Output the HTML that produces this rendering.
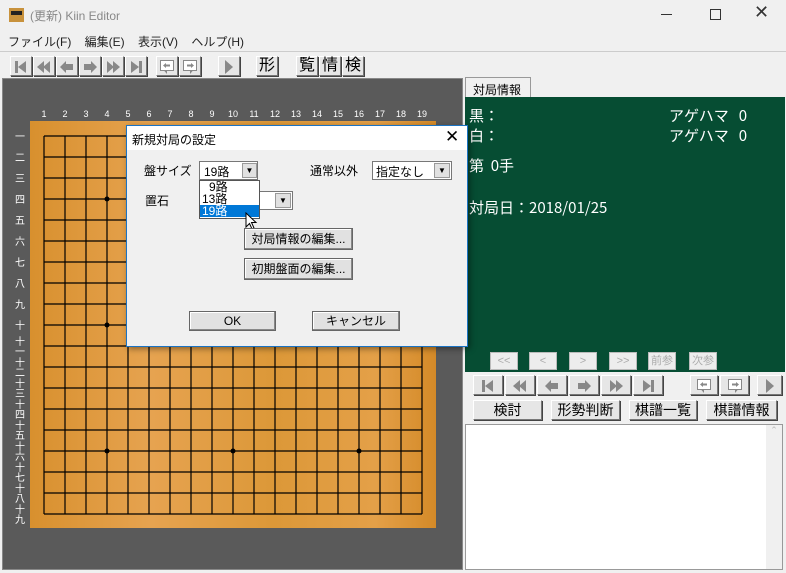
<!DOCTYPE html>
<html><head><meta charset="utf-8"><style>
*{margin:0;padding:0;box-sizing:border-box}
body{width:786px;height:573px;overflow:hidden;background:#f0f0f0;font-family:"Liberation Sans","Noto Sans CJK JP",sans-serif;position:relative;font-size:12px;color:#000}
.a{position:absolute}
.btn{position:absolute;background:#e6e6e6;border:1px solid;border-color:#fff #777 #777 #fff;box-shadow:1px 1px 0 #444;text-align:center;font-size:14px;line-height:18px}
.tb{height:20px;width:22px;color:#999;font-size:12px;line-height:18px}
.tb svg{margin-top:2px}
.k{color:#000;font-size:16px}
.nb{position:absolute;top:352px;height:18px;width:28px;background:#ededed;border:1px solid #bbb;color:#aaa;font-size:11px;line-height:16px;text-align:center}
.dlgbtn{position:absolute;background:#e1e1e1;border:1px solid #666;box-shadow:inset -1px -1px 0 #888,inset 1px 1px 0 #fff;font-size:12px;text-align:center}
.w{color:#fff;font-size:15px;font-family:"Noto Sans CJK JP",sans-serif}
</style></head><body>
<svg width="0" height="0" style="position:absolute"><defs>
<g id="first" fill="#888"><rect x="2" y="2" width="3" height="12"/><path d="M13 2L5 8L13 14Z"/></g>
<g id="ff" fill="#888"><path d="M8 2L1 8L8 14ZM14 2L7 8L14 14Z"/></g>
<g id="lt" fill="#888"><path d="M1 8L7 2V5H14V11H7V14Z"/></g>
<g id="rt" fill="#888"><path d="M15 8L9 2V5H2V11H9V14Z"/></g>
<g id="nf" fill="#888"><path d="M8 2L15 8L8 14ZM2 2L9 8L2 14Z"/></g>
<g id="last" fill="#888"><rect x="11" y="2" width="3" height="12"/><path d="M3 2L11 8L3 14Z"/></g>
<g id="bl"><rect x="1.5" y="1.5" width="13" height="10" fill="#fff" stroke="#888"/><path d="M5 11.5L8 15L8 11.5Z" fill="#888"/><path d="M4 6.5L7 4V5.5H11V7.5H7V9Z" fill="#888"/></g>
<g id="br"><rect x="1.5" y="1.5" width="13" height="10" fill="#fff" stroke="#888"/><path d="M8 11.5L8 15L11 11.5Z" fill="#888"/><path d="M12 6.5L9 4V5.5H5V7.5H9V9Z" fill="#888"/></g>
<g id="pl" fill="#888"><path d="M4 1L12 8L4 15Z"/></g>
</defs></svg>
<div class="a" style="left:9px;top:8px;width:15px;height:14px;background:#c8923c"><div class="a" style="left:2px;top:3px;width:11px;height:4px;background:#222"></div></div>
<div class="a" style="left:30px;top:7px;font-size:12px;color:#888">(更新) Kiin Editor</div>
<div class="a" style="left:661px;top:14px;width:11px;height:1px;background:#333"></div>
<div class="a" style="left:710px;top:9px;width:11px;height:11px;border:1px solid #333"></div>
<div class="a" style="left:754px;top:2px;font-size:18px;color:#333">✕</div>
<div class="a" style="left:8px;top:33px;font-size:12px;color:#222">ファイル(F)&nbsp;&nbsp;&nbsp;&nbsp;編集(E)&nbsp;&nbsp;&nbsp;&nbsp;表示(V)&nbsp;&nbsp;&nbsp;&nbsp;ヘルプ(H)</div>
<div class="a" style="left:0;top:51px;width:786px;height:1px;background:#ccc"></div>
<div class="btn tb" style="left:10px;top:56px"><svg width="16" height="16"><use href="#first"/></svg></div>
<div class="btn tb" style="left:33px;top:56px"><svg width="16" height="16"><use href="#ff"/></svg></div>
<div class="btn tb" style="left:56px;top:56px"><svg width="16" height="16"><use href="#lt"/></svg></div>
<div class="btn tb" style="left:79px;top:56px"><svg width="16" height="16"><use href="#rt"/></svg></div>
<div class="btn tb" style="left:102px;top:56px"><svg width="16" height="16"><use href="#nf"/></svg></div>
<div class="btn tb" style="left:125px;top:56px"><svg width="16" height="16"><use href="#last"/></svg></div>
<div class="btn tb" style="left:156px;top:56px"><svg width="16" height="16"><use href="#bl"/></svg></div>
<div class="btn tb" style="left:179px;top:56px"><svg width="16" height="16"><use href="#br"/></svg></div>
<div class="btn tb" style="left:218px;top:56px"><svg width="16" height="16"><use href="#pl"/></svg></div>
<div class="btn tb k" style="left:256px;top:56px">形</div>
<div class="btn tb k" style="left:296px;top:56px">覧</div>
<div class="btn tb k" style="left:319px;top:56px">情</div>
<div class="btn tb k" style="left:342px;top:56px">検</div>
<div class="a" style="left:2px;top:78px;width:461px;height:492px;background:#5a5a5a;border:1px solid #888"></div>
<div class="a" style="left:30px;top:121px;width:406px;height:407px;background:linear-gradient(90deg,#d8902e,#e6a350 30%,#dc9838 60%,#e4a048 85%,#d48a28)"></div>
<svg class="a" style="left:0;top:0" width="470" height="573" font-family="Liberation Sans" font-size="9" fill="#fff">
<g stroke="#000" stroke-width="1.2">
<path d="M44 136V514M65 136V514M86 136V514M107 136V514M128 136V514M149 136V514M170 136V514M191 136V514M212 136V514M233 136V514M254 136V514M275 136V514M296 136V514M317 136V514M338 136V514M359 136V514M380 136V514M401 136V514M422 136V514"/>
<path d="M44 136H422M44 157H422M44 178H422M44 199H422M44 220H422M44 241H422M44 262H422M44 283H422M44 304H422M44 325H422M44 346H422M44 367H422M44 388H422M44 409H422M44 430H422M44 451H422M44 472H422M44 493H422M44 514H422"/>
</g>
<g fill="#000"><circle cx="107" cy="199" r="2.5"/><circle cx="107" cy="325" r="2.5"/><circle cx="107" cy="451" r="2.5"/><circle cx="233" cy="451" r="2.5"/><circle cx="359" cy="451" r="2.5"/></g>
<g text-anchor="middle">
<text x="44" y="117">1</text><text x="65" y="117">2</text><text x="86" y="117">3</text><text x="107" y="117">4</text><text x="128" y="117">5</text><text x="149" y="117">6</text><text x="170" y="117">7</text><text x="191" y="117">8</text><text x="212" y="117">9</text><text x="233" y="117">10</text><text x="254" y="117">11</text><text x="275" y="117">12</text><text x="296" y="117">13</text><text x="317" y="117">14</text><text x="338" y="117">15</text><text x="359" y="117">16</text><text x="380" y="117">17</text><text x="401" y="117">18</text><text x="422" y="117">19</text>
</g>
<g text-anchor="middle" font-family="Noto Sans CJK JP" font-size="10">
<text x="20" y="140">一</text><text x="20" y="161">二</text><text x="20" y="182">三</text><text x="20" y="203">四</text><text x="20" y="224">五</text><text x="20" y="245">六</text><text x="20" y="266">七</text><text x="20" y="287">八</text><text x="20" y="308">九</text><text x="20" y="329">十</text>
</g>
<g text-anchor="middle" font-family="Noto Sans CJK JP" font-size="10">
<text x="20" y="345">十</text><text x="20" y="355">一</text>
<text x="20" y="366">十</text><text x="20" y="376">二</text>
<text x="20" y="387">十</text><text x="20" y="397">三</text>
<text x="20" y="408">十</text><text x="20" y="418">四</text>
<text x="20" y="429">十</text><text x="20" y="439">五</text>
<text x="20" y="450">十</text><text x="20" y="460">六</text>
<text x="20" y="471">十</text><text x="20" y="481">七</text>
<text x="20" y="492">十</text><text x="20" y="502">八</text>
<text x="20" y="513">十</text><text x="20" y="523">九</text>
</g>
</svg>
<div class="a" style="left:465px;top:77px;width:66px;height:21px;background:#f0f0f0;border:1px solid #999;border-bottom:none;font-size:12px;padding:3px 0 0 7px">対局情報</div>
<div class="a" style="left:465px;top:97px;width:320px;height:275px;background:#064d33"></div>
<div class="a w" style="left:469px;top:106px;line-height:20px">黒：<br>白：</div>
<div class="a w" style="left:669px;top:106px;line-height:20px">アゲハマ&nbsp;&nbsp;&nbsp;0<br>アゲハマ&nbsp;&nbsp;&nbsp;0</div>
<div class="a w" style="left:469px;top:155px">第&nbsp;&nbsp;0手</div>
<div class="a w" style="left:469px;top:197px">対局日：2018/01/25</div>
<div class="nb" style="left:490px">&lt;&lt;</div><div class="nb" style="left:529px">&lt;</div><div class="nb" style="left:569px">&gt;</div><div class="nb" style="left:609px">&gt;&gt;</div><div class="nb" style="left:648px">前参</div><div class="nb" style="left:689px">次参</div>
<div class="btn tb" style="left:473px;top:375px;width:30px"><svg width="16" height="16"><use href="#first"/></svg></div>
<div class="btn tb" style="left:505px;top:375px;width:30px"><svg width="16" height="16"><use href="#ff"/></svg></div>
<div class="btn tb" style="left:537px;top:375px;width:30px"><svg width="16" height="16"><use href="#lt"/></svg></div>
<div class="btn tb" style="left:569px;top:375px;width:30px"><svg width="16" height="16"><use href="#rt"/></svg></div>
<div class="btn tb" style="left:601px;top:375px;width:30px"><svg width="16" height="16"><use href="#nf"/></svg></div>
<div class="btn tb" style="left:633px;top:375px;width:30px"><svg width="16" height="16"><use href="#last"/></svg></div>
<div class="btn tb" style="left:690px;top:375px;width:28px"><svg width="16" height="16"><use href="#bl"/></svg></div>
<div class="btn tb" style="left:720px;top:375px;width:29px"><svg width="16" height="16"><use href="#br"/></svg></div>
<div class="btn tb" style="left:757px;top:375px;width:25px"><svg width="16" height="16"><use href="#pl"/></svg></div>
<div class="btn" style="left:473px;top:400px;width:69px;height:20px">検討</div>
<div class="btn" style="left:551px;top:400px;width:69px;height:20px">形勢判断</div>
<div class="btn" style="left:629px;top:400px;width:68px;height:20px">棋譜一覧</div>
<div class="btn" style="left:706px;top:400px;width:71px;height:20px">棋譜情報</div>
<div class="a" style="left:465px;top:424px;width:318px;height:146px;background:#fff;border:1px solid #999"></div>
<div class="a" style="left:766px;top:425px;width:16px;height:144px;background:#f0f0f0;color:#bbb;font-size:9px;text-align:center">⌃</div>
<div class="a" style="left:126px;top:125px;width:342px;height:222px;background:#f0f0f0;border:1px solid #1a73c4;box-shadow:2px 2px 6px rgba(0,0,0,.4)">
<div class="a" style="left:0;top:0;width:340px;height:24px;background:#fff"></div>
<div class="a" style="left:5px;top:5px;font-size:12px">新規対局の設定</div>
<div class="a" style="left:318px;top:1px;font-size:17px">✕</div>
<div class="a" style="left:17px;top:36px">盤サイズ</div>
<div class="a" style="left:72px;top:35px;width:59px;height:19px;background:#fff;border:1px solid #777;padding:1px 4px">19路</div>
<div class="a" style="left:115px;top:37px;width:15px;height:15px;background:#e1e1e1;border:1px solid #999;font-size:8px;text-align:center;line-height:14px">▼</div>
<div class="a" style="left:183px;top:36px">通常以外</div>
<div class="a" style="left:245px;top:35px;width:80px;height:19px;background:#fff;border:1px solid #777;padding:1px 3px">指定なし</div>
<div class="a" style="left:307px;top:37px;width:16px;height:15px;background:#e1e1e1;border:1px solid #999;font-size:8px;text-align:center;line-height:14px">▼</div>
<div class="a" style="left:18px;top:66px">置石</div>
<div class="a" style="left:130px;top:65px;width:36px;height:19px;background:#fff;border:1px solid #777"></div>
<div class="a" style="left:148px;top:67px;width:16px;height:15px;background:#e1e1e1;border:1px solid #999;font-size:8px;text-align:center;line-height:14px">▼</div>
<div class="a" style="left:72px;top:54px;width:61px;height:39px;background:#fff;border:1px solid #555;font-size:12px;line-height:12px">
<div style="padding-left:9px">9路</div><div style="padding-left:2px">13路</div><div style="padding-left:2px;background:#0078d7;color:#fff">19路</div></div>
<svg class="a" style="left:118px;top:86px" width="14" height="20"><path d="M1 1V15L4.5 11.5L7 17L9 16L6.5 10.5H11Z" fill="#fff" stroke="#000"/></svg>
<div class="dlgbtn" style="left:117px;top:102px;width:109px;height:22px;line-height:20px">対局情報の編集...</div>
<div class="dlgbtn" style="left:117px;top:132px;width:109px;height:22px;line-height:20px">初期盤面の編集...</div>
<div class="dlgbtn" style="left:62px;top:185px;width:87px;height:20px;line-height:18px">OK</div>
<div class="dlgbtn" style="left:185px;top:185px;width:88px;height:20px;line-height:18px">キャンセル</div>
</div>
</body></html>
